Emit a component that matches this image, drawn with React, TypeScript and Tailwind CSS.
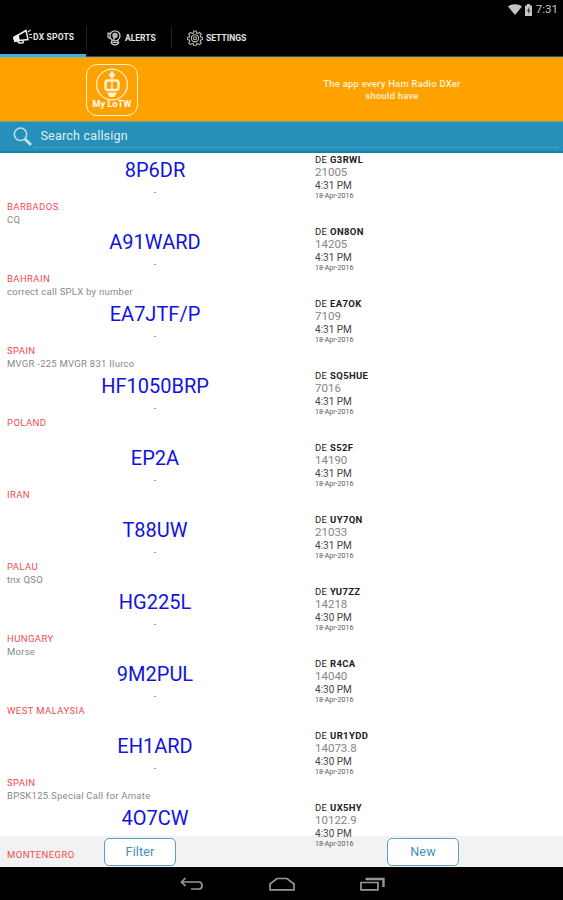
import React from "react";

type Spot = { call: string; country: string; note: string; by: string; freq: string; time: string };

const spots: Spot[] = [
  { call: "8P6DR", country: "BARBADOS", note: "CQ", by: "G3RWL", freq: "21005", time: "4:31 PM" },
  { call: "A91WARD", country: "BAHRAIN", note: "correct call SPLX by number", by: "ON8ON", freq: "14205", time: "4:31 PM" },
  { call: "EA7JTF/P", country: "SPAIN", note: "MVGR -225 MVGR 831 Ilurco", by: "EA7OK", freq: "7109", time: "4:31 PM" },
  { call: "HF1050BRP", country: "POLAND", note: "", by: "SQ5HUE", freq: "7016", time: "4:31 PM" },
  { call: "EP2A", country: "IRAN", note: "", by: "S52F", freq: "14190", time: "4:31 PM" },
  { call: "T88UW", country: "PALAU", note: "tnx QSO", by: "UY7QN", freq: "21033", time: "4:31 PM" },
  { call: "HG225L", country: "HUNGARY", note: "Morse", by: "YU7ZZ", freq: "14218", time: "4:30 PM" },
  { call: "9M2PUL", country: "WEST MALAYSIA", note: "", by: "R4CA", freq: "14040", time: "4:30 PM" },
  { call: "EH1ARD", country: "SPAIN", note: "BPSK125.Special Call for Amate", by: "UR1YDD", freq: "14073.8", time: "4:30 PM" },
  { call: "4O7CW", country: "MONTENEGRO", note: "", by: "UX5HY", freq: "10122.9", time: "4:30 PM" },
];

function StatusBar() {
  return (
    <div className="flex h-[19px] shrink-0 items-center justify-end pr-[5px] text-[#c4c4c4]">
      <svg width="14" height="11" viewBox="0 0 14 11" fill="currentColor">
        <path d="M0 2.4C4 -.5 10 -.5 14 2.4L7 11Z" />
      </svg>
      <svg className="ml-[2px]" width="9" height="12" viewBox="0 0 9 12">
        <path d="M1 1.5h2V0h3v1.5h2V12H1z" fill="currentColor" />
        <path d="M5.3 2.8 3 7h1.3v3L6.4 6H5.1z" fill="#333" />
      </svg>
      <span className="ml-[3px] text-[11.5px] leading-none">7:31</span>
    </div>
  );
}

function MegaphoneIcon() {
  return (
    <svg width="20" height="15" viewBox="0 0 20 15" fill="none" stroke="#eee" strokeWidth="1.5">
      <path d="M1 8.5 13 1.5 15 10.5 2 12Z" />
      <path d="M.8 8.5 5 6.2 6.2 11.6 1.8 12.2Z" fill="#eee" />
      <path d="M4.5 12 6 14l4-.3.3-2" />
      <path d="m15 3 2.5-2M16 5.7l3-.5M16.3 8.3l3 .7" strokeWidth="1.1" />
    </svg>
  );
}

function AlertIcon() {
  return (
    <svg width="15" height="16" viewBox="0 0 15 16" fill="none" stroke="#c8c8c8" strokeWidth="1.3">
      <circle cx="8" cy="5.8" r="5" />
      <circle cx="8" cy="5.5" r="2" />
      <path d="M3.2 3.5 1 3.2v4L3.6 9M5 10.3 4.2 13c2 2.3 5.5 2.3 7.5 0L10.5 10M5.5 12.4h5M7.5 7.5 6.5 10" />
      <circle cx="8" cy="5.5" r=".7" fill="#eee" />
    </svg>
  );
}

function GearIcon() {
  return (
    <svg width="16" height="16" viewBox="0 0 16 16" fill="none" stroke="#bdbdbd" strokeWidth="1.1">
      <path d="m6.8 1h2.4l.4 2 1.3.5 1.7-1.1 1.7 1.7-1.1 1.7.5 1.2 2 .5v2l-2 .5-.5 1.2 1.1 1.7-1.7 1.7-1.7-1.1-1.3.5-.4 2H6.8l-.4-2-1.3-.5-1.7 1.1-1.7-1.7 1.1-1.7L2.3 10l-2-.5v-2l2-.5.5-1.2-1.1-1.7 1.7-1.7 1.7 1.1L6.4 3z" />
      <circle cx="8" cy="8.3" r="3.6" />
      <circle cx="8" cy="8.3" r="1.5" />
    </svg>
  );
}

function Tabs() {
  return (
    <div className="flex h-[38px] shrink-0 text-[8.5px] font-bold text-[#e4e4e4]">
      <div className="flex w-[86px] items-center border-b-[3px] border-[#33b5e5] pl-[13px]">
        <MegaphoneIcon />
        <span className="mt-px whitespace-nowrap tracking-[0.2px]">DX SPOTS</span>
      </div>
      <div className="flex w-[86px] items-center border-b border-[#285468]">
        <div className="flex h-[23px] w-full items-center border-x border-[#222] pl-[20px]">
          <AlertIcon />
          <span className="ml-[3px] mt-px">ALERTS</span>
        </div>
      </div>
      <div className="flex flex-1 items-center border-b border-[#285468] pl-[15px]">
        <GearIcon />
        <span className="ml-[3px] mt-px">SETTINGS</span>
      </div>
    </div>
  );
}

function Banner() {
  return (
    <div className="flex h-[64px] shrink-0 items-center border-t border-[#c9a05a] bg-[#ffa200]">
      <div className="ml-[86px] flex h-[52px] w-[52px] flex-col items-center rounded-[11px] border-[1.5px] border-[#fff0cf] pt-[3px]">
        <svg width="34" height="33" viewBox="0 0 34 33" fill="none" stroke="#fff0cf">
          <circle cx="17" cy="16.5" r="15.4" strokeWidth="1.3" />
          <path d="M17 3v8" strokeWidth="1.6" />
          <path d="m17 3 3.5 4L17 11l-3.500-4z" fill="#fff0cf" stroke="none" />
          <rect x="10.500" y="12.500" width="13" height="9.500" rx="2.500" strokeWidth="2.6" />
          <path d="M17 12v10" strokeWidth="1.6" />
          <path d="M12 24.500h10l-2.500 4.500h-5z" fill="#fff0cf" stroke="none" />
        </svg>
        <span className="-mt-[2px] whitespace-nowrap text-[9px] font-bold leading-[11px] tracking-[0.1px] text-white">My LoTW</span>
      </div>
      <p className="ml-[172px] w-[164px] pt-px text-center text-[9.5px] font-medium leading-[12px] tracking-[0.21px] text-[#fff3d8]">
        The app every Ham Radio DXer
        <br />
        should have
      </p>
    </div>
  );
}

function Search() {
  return (
    <div className="flex h-[32px] shrink-0 border-b-2 border-t border-b-[#1283ab] border-t-[#7f9b85] bg-[#2590ba] pl-[13px] pr-[5px]">
      <svg className="mt-[5px]" width="20" height="20" viewBox="0 0 20 20" fill="none" stroke="#c6dde6">
        <circle cx="7.5" cy="7.3" r="6.2" strokeWidth="1.5" />
        <path d="m12 12 6 6" strokeWidth="3" />
      </svg>
      <div className="mb-[3px] flex flex-1 items-center border-b border-[#48a1c5] pl-[7.5px] pt-[4px] text-[12.5px] leading-none tracking-[0.2px] text-[#e0eff5]">
        Search callsign
      </div>
    </div>
  );
}

function SpotRow({ spot }: { spot: Spot }) {
  return (
    <div className="flex h-[72px] shrink-0 whitespace-nowrap">
      <div className="w-[315px]">
        <div className="w-[310px] pt-[5px] text-center text-[20px] leading-[24px] text-[#1212e0]">{spot.call}</div>
        <div className="h-[17.5px] w-[310px] text-center text-[9px] leading-[20px] text-[#777]">-</div>
        <div className="pl-[7px] text-[9.5px] leading-[13px] tracking-[0.4px] text-[#f24b50]">{spot.country}</div>
        <div className="pl-[7px] text-[9.5px] leading-[13px] tracking-[0.26px] text-[#888]">{spot.note}</div>
      </div>
      <div className="pt-px">
        <div className="text-[9.5px] leading-[12px] tracking-[0.35px] text-[#222]">
          DE <b>{spot.by}</b>
        </div>
        <div className="text-[11.5px] leading-[12.5px] text-[#858585]">{spot.freq}</div>
        <div className="text-[10px] leading-[13px] text-[#444]">{spot.time}</div>
        <div className="text-[7px] leading-[8px] text-[#555]">18-Apr-2016</div>
      </div>
    </div>
  );
}

const buttonClass =
  "h-[28px] w-[72px] rounded-[5px] border-[1.5px] border-[#5aa2c4] bg-white pt-px text-[12.5px] leading-none tracking-[0.15px] text-[#438fb7]";

function NavBar() {
  return (
    <div className="flex h-[33px] shrink-0 items-center bg-black pl-[180px] pt-px">
      <svg width="24" height="14" viewBox="0 0 24 14" fill="none" stroke="#969696" strokeWidth="1.7">
        <path d="M5.500 1 1.500 5l4 4M2 5h17c4 0 4 7 0 7h-8" />
      </svg>
      <svg className="ml-[65px]" width="26" height="14" viewBox="0 0 26 14" fill="none" stroke="#969696" strokeWidth="1.7">
        <path d="M1 12.800V7l7-5.500h10L25 7v5.800z" />
      </svg>
      <svg className="ml-[65px]" width="25" height="14" viewBox="0 0 25 14" fill="none" stroke="#969696" strokeWidth="1.7">
        <path d="M1 5.500h17v7.300H1z" />
        <path d="M5.500 2h18v8" strokeWidth="2.4" />
      </svg>
    </div>
  );
}

export default function App() {
  return (
    <div className="flex h-[900px] w-[563px] flex-col overflow-hidden bg-black font-[Roboto,sans-serif]">
      <StatusBar />
      <Tabs />
      <Banner />
      <Search />
      <main className="relative isolate h-[714px] shrink-0 overflow-hidden bg-white">
        <div className="absolute inset-x-0 bottom-0 -z-10 h-[31px] bg-[#f2f2f2]" />
        <div className="flex flex-col">
          {spots.map((s) => (
            <SpotRow key={s.call} spot={s} />
          ))}
        </div>
        <footer className="absolute inset-x-0 bottom-0 flex h-[31px] items-center pl-[104px]">
          <button className={buttonClass}>Filter</button>
          <button className={`ml-[211px] ${buttonClass}`}>New</button>
        </footer>
      </main>
      <NavBar />
    </div>
  );
}
